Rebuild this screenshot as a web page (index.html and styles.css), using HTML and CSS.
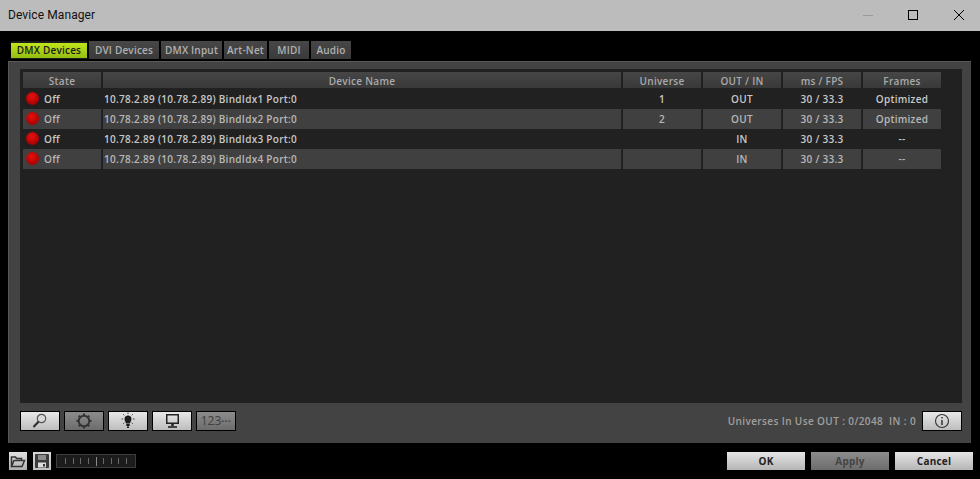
FILE: index.html
```html
<!DOCTYPE html>
<html>
<head>
<meta charset="utf-8">
<title>Device Manager</title>
<link rel="stylesheet" href="styles.css">
</head>
<body>
<div class="window">
  <header class="titlebar">
    <span class="title">Device Manager</span>
    <div class="winctl">
      <svg class="wbtn" width="46" height="30" viewBox="0 0 46 30"><path d="M21 15.500h10" stroke="#9a9a9a" fill="none"/></svg>
      <svg class="wbtn" width="46" height="30" viewBox="0 0 46 30"><rect x="20.500" y="10.500" width="9" height="9" stroke="#000" fill="none"/></svg>
      <svg class="wbtn" width="46" height="30" viewBox="0 0 46 30"><path d="M20 10l10 10M30 10l-10 10" stroke="#000" fill="none"/></svg>
    </div>
  </header>
  <nav class="tabs">
    <div class="tab active">DMX Devices</div>
    <div class="tab w-dvi">DVI Devices</div>
    <div class="tab w-input">DMX Input</div>
    <div class="tab w-art">Art-Net</div>
    <div class="tab w-midi">MIDI</div>
    <div class="tab w-audio">Audio</div>
  </nav>
  <main class="panel">
    <section class="listbox">
      <div class="row head">
        <div class="c state">State</div><div class="c name">Device Name</div><div class="c uni">Universe</div><div class="c io">OUT / IN</div><div class="c fps">ms / FPS</div><div class="c fr">Frames</div>
      </div>
      <div class="row">
        <div class="c state"><i class="led"></i>Off</div><div class="c name">10.78.2.89 (10.78.2.89) BindIdx1 Port:0</div><div class="c uni">1</div><div class="c io">OUT</div><div class="c fps">30 / 33.3</div><div class="c fr">Optimized</div>
      </div>
      <div class="row alt">
        <div class="c state"><i class="led"></i>Off</div><div class="c name">10.78.2.89 (10.78.2.89) BindIdx2 Port:0</div><div class="c uni">2</div><div class="c io">OUT</div><div class="c fps">30 / 33.3</div><div class="c fr">Optimized</div>
      </div>
      <div class="row">
        <div class="c state"><i class="led"></i>Off</div><div class="c name">10.78.2.89 (10.78.2.89) BindIdx3 Port:0</div><div class="c uni"></div><div class="c io">IN</div><div class="c fps">30 / 33.3</div><div class="c fr">--</div>
      </div>
      <div class="row alt">
        <div class="c state"><i class="led"></i>Off</div><div class="c name">10.78.2.89 (10.78.2.89) BindIdx4 Port:0</div><div class="c uni"></div><div class="c io">IN</div><div class="c fps">30 / 33.3</div><div class="c fr">--</div>
      </div>
    </section>
    <div class="toolbar">
      <button class="tool"><svg width="24" height="18" viewBox="0 0 24 18"><circle cx="13.500" cy="6.500" r="4.200" fill="#d8d8d8" stroke="#555" stroke-width="1.200"/><path d="M10.500 9.800L5.500 15" stroke="#2a2a2a" stroke-width="2"/></svg></button>
      <button class="tool dim"><svg width="24" height="18" viewBox="0 0 24 18"><circle cx="12" cy="9" r="5.300" fill="none" stroke="#333" stroke-width="2"/><path d="M12 1.500v2.500M12 14v2.500M4.500 9H7M17 9h2.500M6.700 3.700l1.700 1.700M15.600 12.600l1.700 1.700M17.300 3.700l-1.700 1.700M8.400 12.600l-1.700 1.700" stroke="#333" stroke-width="2"/></svg></button>
      <button class="tool"><svg width="24" height="18" viewBox="0 0 24 18"><path d="M8.500 7a3.500 3.500 0 1 1 7 0c0 1.800-1.200 2.800-1.500 4.500h-4C9.700 9.800 8.500 8.800 8.500 7zM10.300 12h3.400v2h-3.400zM11 14.500h2V16h-2z" fill="#1c1c1c"/><path d="M12 .5v1.500M5.500 7H7M17 7h1.500M7.200 2.200l1.100 1.100M16.800 2.200l-1.100 1.100M7.200 11.800l1.100-1.100M16.800 11.800l-1.100-1.100" stroke="#444"/></svg></button>
      <button class="tool"><svg width="24" height="18" viewBox="0 0 24 18"><rect x="6.750" y="2.750" width="11.500" height="8.500" fill="none" stroke="#222" stroke-width="1.500"/><path d="M12.500 12v2" stroke="#222" stroke-width="2.500"/><path d="M8 15h9" stroke="#222" stroke-width="1.600"/></svg></button>
      <button class="tool dim num">123<span class="dots">···</span></button>
      <span class="usage">Universes In Use OUT : 0/2048&nbsp; IN : 0</span>
      <button class="tool info"><svg width="18" height="18" viewBox="0 0 18 18"><circle cx="9" cy="9" r="6.500" fill="none" stroke="#333" stroke-width="1.100"/><path d="M9 8v5" stroke="#333" stroke-width="1.500"/><path d="M9 5v1.500" stroke="#333" stroke-width="1.500"/></svg></button>
    </div>
  </main>
  <footer class="footer">
    <button class="mini"><svg width="16" height="14" viewBox="0 0 16 14"><path d="M1.500 12.500V3h4l1 1.500h5V6.500M1.500 12.500l2.500-6h10.500l-2.500 6z" fill="none" stroke="#333" stroke-width="1.500"/></svg></button>
    <button class="mini save"><svg width="16" height="16" viewBox="0 0 16 16"><path d="M1.500 1.500h13v13h-13z" fill="#3c3c3c" stroke="#3c3c3c"/><rect x="4" y="2" width="8" height="5" fill="#8a8a8a"/><rect x="4" y="9.500" width="8" height="5" fill="#ddd"/><rect x="9" y="11" width="2" height="2.500" fill="#333"/></svg></button>
    <div class="meter"><i></i><i></i><i></i><i></i><i class="mid"></i><i></i><i></i><i></i><i></i></div>
    <div class="actions">
      <button class="act">OK</button>
      <button class="act off">Apply</button>
      <button class="act">Cancel</button>
    </div>
  </footer>
</div>
</body>
</html>
```
FILE: styles.css
```css
* { box-sizing: border-box; }
html, body { margin: 0; padding: 0; background: #000; }
body { width: 980px; height: 479px; overflow: hidden; font-family: "Open Sans", "Noto Sans", sans-serif; }
button { font-family: inherit; margin: 0; padding: 0; cursor: default; }
.window { width: 980px; height: 479px; display: flex; flex-direction: column; background: #000; }

.titlebar { height: 31px; flex: none; background: #bcbcbc; display: flex; align-items: center; justify-content: space-between; padding-left: 8px; }
.title { font: 12px/30px Roboto, "Open Sans", sans-serif; color: #111; letter-spacing: .1px; margin-top: -1px; }
.winctl { display: flex; height: 30px; margin-top: -1px; }
.wbtn { display: block; width: 46px; height: 30px; }

.tabs { display: flex; gap: 2px; height: 20px; margin-top: 10px; padding-left: 11px; flex: none; }
.tab { height: 18px; width: 60px; background: linear-gradient(#474747, #3a3a3a); color: #b0b0b0; font-size: 10px; font-weight: 600; letter-spacing: .2px; line-height: 18px; text-align: center; white-space: nowrap; }
.tab.active { width: 76px; background: linear-gradient(#bfe51c, #95bd10); color: #1a1a1a; border-top: 2px solid #1c1c1c; border-bottom: 1px solid #1c1c1c; line-height: 15px; }
.w-dvi { width: 70px; }
.w-input { width: 61px; }
.w-art { width: 43px; }
.w-midi { width: 40px; }
.w-audio { width: 40px; }

.panel { height: 382px; margin: 0 9px 0 8px; flex: none; background: #434343; padding: 7px 9px 0 11px; border-top: 1px solid #5a5a5a; border-left: 1px solid #555; }
.listbox { height: 334px; background: #212121; padding: 3px 0 0 3px; }

.row { display: flex; gap: 2px; height: 20px; }
.c { height: 20px; font-size: 10px; font-weight: 600; letter-spacing: .28px; line-height: 20px; color: #c8c8c8; text-align: center; white-space: nowrap; }
.state { width: 78px; text-align: left; padding-left: 21px; position: relative; }
.name { width: 518px; text-align: left; padding-left: 1px; }
.uni { width: 78px; }
.io { width: 78px; }
.fps { width: 78px; }
.fr { width: 78px; }
.head .c { height: 16px; line-height: 18px; background: linear-gradient(#464646, #393939); color: #aaa; }
.head { height: 17px; }
.head .state { text-align: center; padding-left: 0; }
.head .name { text-align: center; padding-left: 0; }
.alt .c { background: #404040; color: #b8b8b8; }

.led { position: absolute; left: 3px; top: 3px; width: 13px; height: 13px; border-radius: 50%; background: radial-gradient(circle at 45% 35%, #e81010, #a80000 75%, #6a0000); }

.toolbar { display: flex; align-items: center; height: 36px; gap: 4px; }
.tool { width: 40px; height: 20px; border: 1px solid #000; background: linear-gradient(#e8e8e8, #bdbdbd); display: flex; align-items: center; justify-content: center; }
.tool.dim { background: linear-gradient(#8c8c8c, #6c6c6c); }
.num { font-size: 12px; font-weight: 400; color: #3e3e3e; line-height: 18px; }
.dots { font-size: 10px; font-weight: 700; letter-spacing: .5px; }
.usage { margin-left: auto; margin-right: 2px; font-size: 10px; font-weight: 600; letter-spacing: .39px; color: #a0a0a0; }

.footer { flex: 1; display: flex; align-items: center; padding: 0 7px 0 9px; }
.mini { width: 18px; height: 18px; border: 0; background: linear-gradient(#e0e0e0, #b0b0b0); display: flex; align-items: center; justify-content: center; margin-right: 6px; }
.save { background: linear-gradient(#d8d8d8, #c0c0c0); }
.meter { width: 80px; height: 14px; border: 1px solid #3c3c3c; background: #1c1c1c; display: flex; justify-content: space-between; align-items: center; padding: 0 8px; margin-left: -1px; }
.meter i { display: block; width: 1px; height: 6px; background: #6a6a6a; }
.meter .mid { height: 9px; background: #8a8a8a; }
.actions { margin-left: auto; display: flex; gap: 6px; }
.act { width: 78px; height: 18px; border: 0; background: linear-gradient(#e6e6e6, #b5b5b5); font-size: 10px; font-weight: 700; letter-spacing: .2px; color: #222; }
.act.off { background: linear-gradient(#8c8c8c, #6c6c6c); color: #444; }
```
